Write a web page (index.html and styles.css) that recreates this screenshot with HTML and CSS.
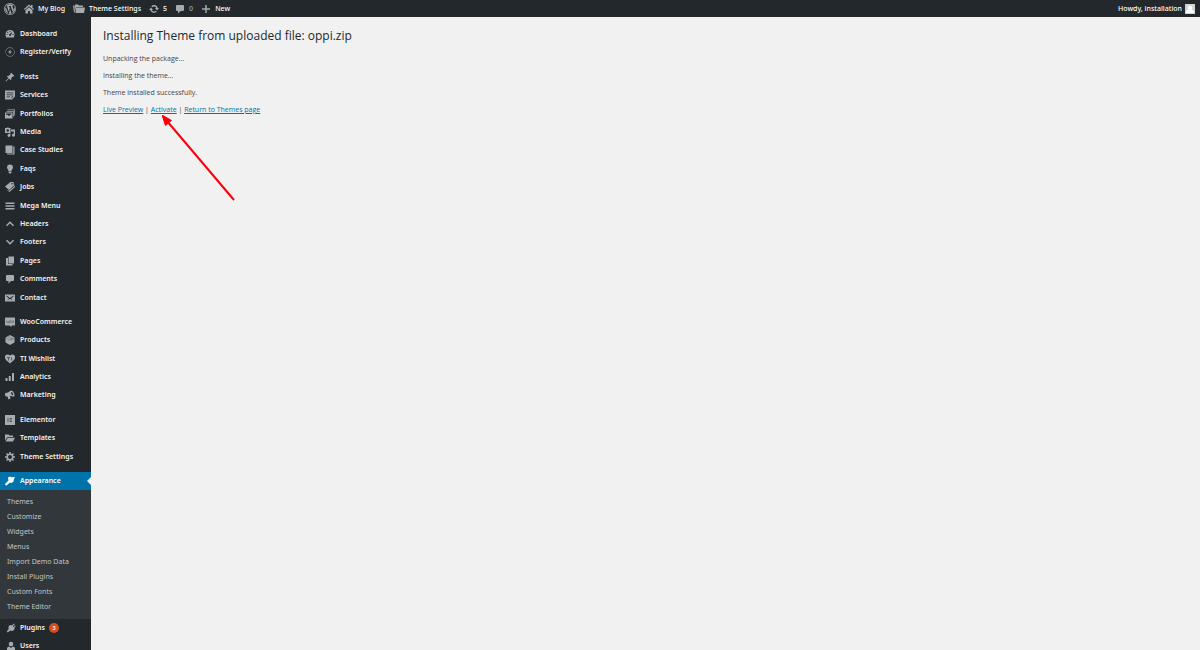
FILE: index.html
```
<!DOCTYPE html>
<html lang="en">
<head>
<meta charset="utf-8">
<title>Installing Theme</title>
<link rel="stylesheet" href="styles.css">
</head>
<body>
<header class="adminbar">
  <nav class="bar-left" aria-label="Toolbar">
    <a class="bar-item logo" href="#" aria-label="WordPress"><svg class="icon big" viewBox="0 0 20 20"><path fill-rule="evenodd" d="M10 0a10 10 0 1 0 0 20 10 10 0 0 0 0-20zm0 1.200a8.800 8.800 0 1 1 0 17.600 8.800 8.800 0 0 1 0-17.600z"/><path d="M2.800 6.800 7 17.500A8 8 0 0 1 2.800 6.800zM3.500 5.500A8 8 0 0 1 15.300 4c-1.300.2-1.600 1.500-1 2.700l1 2c.5 1.200.2 2.300-.2 3.600l-.8 2.300-3-8.800 1-.2V5H7.400v.6l1.100.2 1.200 3.300-1.700 5.200-3-8.500 1-.2V5zM10.200 10.800l2.400 6.800a8 8 0 0 1-4.600.2zM17.200 6.500A8 8 0 0 1 14 16.900l2.600-7.500c.4-1 .6-2 .6-2.900z"/></svg></a>
    <a class="bar-item site" href="#"><svg class="icon" viewBox="0 0 20 20"><path d="M10 1 0 10l1.500 1.800L10 4.500l8.500 7.300L20 10l-3-2.700V2h-3v2.500zM3 12.500l7-6 7 6V19h-5v-5H8v5H3z"/></svg>My Blog</a>
    <a class="bar-item themes" href="#"><svg class="icon wide" viewBox="0 0 24 20"><path d="M4 1h6l2 2h8v3H6L4 14z"/><path d="M0 3h3l1 14H2zM6 7h18l-2 11H5z"/></svg>Theme Settings</a>
    <a class="bar-item updates" href="#"><svg class="icon" viewBox="0 0 20 20"><path d="M10 2a8 8 0 0 1 7.500 6H20l-4 5-4-5h2.500A5 5 0 0 0 6.500 6.500L4.500 4.500A8 8 0 0 1 10 2zM4 7l4 5H5.500a5 5 0 0 0 8 1.500l2 2A8 8 0 0 1 2.500 12H0z"/></svg>5</a>
    <a class="bar-item dim" href="#"><svg class="icon" viewBox="0 0 20 20"><path d="M4 2h12q2 0 2 2v8q0 2-2 2h-5l-5 5v-5H4q-2 0-2-2V4q0-2 2-2z"/></svg>0</a>
    <a class="bar-item" href="#"><svg class="icon" viewBox="0 0 20 20"><path d="M8.500 2h3v6.500H18v3h-6.500V18h-3v-6.500H2v-3h6.500z"/></svg>New</a>
  </nav>
  <a class="account" href="#">Howdy, installation<svg class="avatar" viewBox="0 0 20 20"><path class="avatar-bg" d="M0 0h20v20H0z"/><path class="avatar-fg" d="M10 3a4.500 4.500 0 0 1 3 8c3 1 5 2.500 5 6v1H2v-1c0-3.500 2-5 5-6a4.500 4.500 0 0 1 3-8z"/></svg></a>
</header>
<div class="layout">
  <nav class="sidebar" aria-label="Main menu">
    <ul class="group">
      <li><a class="item" href="#"><svg class="icon" viewBox="0 0 20 20"><path fill-rule="evenodd" d="M10 2a9 9 0 0 0-9 9q0 3 1.500 6h15Q19 14 19 11a9 9 0 0 0-9-9zM9 4h2v2H9zM4.500 6h2v2h-2zM3 10h2v2H3zm12 0h2v2h-2zm-.5-4L12 12q0 2-2 2t-2-2q0-1 1-2z"/></svg>Dashboard</a></li>
      <li><a class="item" href="#"><svg class="icon" viewBox="0 0 20 20"><circle class="line thin" cx="10" cy="10" r="9" stroke-dasharray="24 2"/><path d="m11 5-5 6h3.500L9 15l5-6h-3.500z"/></svg>Register/Verify</a></li>
    </ul>
    <ul class="group">
      <li><a class="item" href="#"><svg class="icon" viewBox="0 0 20 20"><path d="m12 1 7 7-2 1-1-.5-3.500 3.500c.5 2 0 3.500-1 4.500L8 13l-6 6-1-1 6-6-3.500-3.500c1-1 2.500-1.500 4.500-1L11.500 4 11 3z"/></svg>Posts</a></li>
      <li><a class="item" href="#"><svg class="icon" viewBox="0 0 20 20"><path fill-rule="evenodd" d="M0 1h20v12l-6 6H0zm3 4v1.500h14V5zm0 4v1.500h14V9zm0 4v1.500h7V13zm10 0v4l4-4z"/></svg>Services</a></li>
      <li><a class="item" href="#"><svg class="icon" viewBox="0 0 20 20"><path d="M5 1h15v12h-1.500V2.500H5zM3 4h14.500v11H16V5.500H3z"/><path fill-rule="evenodd" d="M0 7h15v12H0zm2 2v3l2-1 4 3 5-4V9z"/></svg>Portfolios</a></li>
      <li><a class="item" href="#"><svg class="icon" viewBox="0 0 20 20"><path fill-rule="evenodd" d="M0 2h3l1-1h3l1 1h3v10H0zm5.500 2.500a2.500 2.500 0 1 0 0 5 2.500 2.500 0 0 0 0-5z"/><path d="M12 5h8v11.500a3 3 0 1 1-2.500-3V9H12zM8.500 13H11v4a3 3 0 1 1-2.500-3z"/></svg>Media</a></li>
      <li><a class="item" href="#"><svg class="icon" viewBox="0 0 20 20"><path d="M1 1h14v15H1zM16.500 3H19v16H4v-2h12.500z"/></svg>Case Studies</a></li>
      <li><a class="item" href="#"><svg class="icon" viewBox="0 0 20 20"><path d="M10 1a6 6 0 0 1 6 6c0 3-3 4-3 7H7c0-3-3-4-3-7a6 6 0 0 1 6-6zM7 15h6v2l-1.500 2h-3L7 17z"/></svg>Faqs</a></li>
      <li><a class="item" href="#"><svg class="icon" viewBox="0 0 20 20"><path fill-rule="evenodd" d="M11 0h6l1 7-10 9-8-7zm3 2a1.500 1.500 0 1 0 0 3 1.500 1.500 0 0 0 0-3z"/><path d="m19 3 1 7-11 10-6-4 5 1.500L19 8z"/></svg>Jobs</a></li>
      <li><a class="item" href="#"><svg class="icon" viewBox="0 0 20 20"><path d="M1 3h18v3H1zM1 8.500h18v3H1zM1 14h18v3H1z"/></svg>Mega Menu</a></li>
      <li><a class="item" href="#"><svg class="icon" viewBox="0 0 20 20"><path class="line" d="m3 13.500 7-7 7 7"/></svg>Headers</a></li>
      <li><a class="item" href="#"><svg class="icon" viewBox="0 0 20 20"><path class="line" d="m3 6.500 7 7 7-7"/></svg>Footers</a></li>
      <li><a class="item" href="#"><svg class="icon" viewBox="0 0 20 20"><path d="M7 1h11v14H7zM2 4h4v12h9v3H2z"/></svg>Pages</a></li>
      <li><a class="item" href="#"><svg class="icon" viewBox="0 0 20 20"><path d="M4 2h12q2 0 2 2v8q0 2-2 2h-4l-5 5v-5H4q-2 0-2-2V4q0-2 2-2z"/></svg>Comments</a></li>
      <li><a class="item" href="#"><svg class="icon" viewBox="0 0 20 20"><path fill-rule="evenodd" d="M0 3h20v14H0zm3 2v2l5 4-4 4 5-3h2l5 3-4-4 5-4V5l-7 5z"/></svg>Contact</a></li>
    </ul>
    <ul class="group">
      <li><a class="item" href="#"><svg class="icon" viewBox="0 0 20 20"><path d="M1 1h18q1 0 1 1v14q0 1-1 1h-6v3l-4-3H1q-1 0-1-1V2q0-1 1-1z"/><path class="mark" d="m3 7 1 5 1.500-3L7 12l1-5M9.500 7.500h2.500v4H9.500zM14.500 7.500H17v4h-2.500z"/></svg>WooCommerce</a></li>
      <li><a class="item" href="#"><svg class="icon" viewBox="0 0 20 20"><path d="m10 0 9 5v10l-9 5-9-5V5z"/><path class="mark" d="m2 6 8 4 8-4M6 3l8 4v4"/></svg>Products</a></li>
      <li><a class="item" href="#"><svg class="icon" viewBox="0 0 20 20"><path d="M10 19 2 12C-2 7 0 1 5 1q3 0 5 2 2-2 5-2c5 0 7 6 3 11z"/><path class="mark bold" d="M4 7h6M7 7v6M13 7v6"/></svg>TI Wishlist</a></li>
      <li><a class="item" href="#"><svg class="icon" viewBox="0 0 20 20"><path d="M1 12h4v6H1zM7.500 8h4v10h-4zM14 2h4v16h-4z"/></svg>Analytics</a></li>
      <li><a class="item" href="#"><svg class="icon" viewBox="0 0 20 20"><path fill-rule="evenodd" d="M13 1c4 0 8 10 5 12-2 1-5-1-8-1l1 5-4 2-2-6c-4 1-7-3-4-7 5 0 8-4 12-5zm0 3c-2 2 0 6 3 7 1-2-1-7-3-7z"/></svg>Marketing</a></li>
    </ul>
    <ul class="group">
      <li><a class="item" href="#"><svg class="icon" viewBox="0 0 20 20"><path d="M0 0h20v20H0z"/><path class="mark bold" d="M6 6v8M9 7h5M9 10h5M9 13h5"/></svg>Elementor</a></li>
      <li><a class="item" href="#"><svg class="icon" viewBox="0 0 20 20"><path d="M0 3h7l2 2h7v3H5l-5 7zM5.500 9.500H20L16 17H1z"/></svg>Templates</a></li>
      <li><a class="item" href="#"><svg class="icon" viewBox="0 0 20 20"><circle class="line gear" cx="10" cy="10" r="5.500"/><path class="line gear" d="M10 0v4M10 16v4M0 10h4M16 10h4M3 3l3 3M14 14l3 3M3 17l3-3M14 6l3-3"/></svg>Theme Settings</a></li>
    </ul>
    <div class="current">
      <a class="item active" href="#"><svg class="icon" viewBox="0 0 20 20"><path d="M6 3 10 1l3 1.500L20 2l-2 4-1 5-4 3-3-1-7 6-3-1 1-3 6-6z"/></svg>Appearance</a>
      <ul class="submenu">
        <li><a href="#">Themes</a></li>
        <li><a href="#">Customize</a></li>
        <li><a href="#">Widgets</a></li>
        <li><a href="#">Menus</a></li>
        <li><a href="#">Import Demo Data</a></li>
        <li><a href="#">Install Plugins</a></li>
        <li><a href="#">Custom Fonts</a></li>
        <li><a href="#">Theme Editor</a></li>
      </ul>
    </div>
    <ul class="group last">
      <li><a class="item" href="#"><svg class="icon" viewBox="0 0 20 20"><path d="m12 5 4-4 1.500 1.500-4 4 1.500 1.500 3-3L19.500 6l-3 3.500 1 1.500c-2 5-6 6-9 4l-5 4-2-2 4-5c-2-4 0-7 4-8z"/></svg>Plugins<span class="badge">3</span></a></li>
      <li><a class="item" href="#"><svg class="icon" viewBox="0 0 20 20"><circle cx="10" cy="6" r="4.500"/><path d="M2 19v-4q0-4 5-4l3 3 3-3q5 0 5 4v4z"/></svg>Users</a></li>
    </ul>
  </nav>
  <main class="content">
    <h1>Installing Theme from uploaded file: oppi.zip</h1>
    <p>Unpacking the package…</p>
    <p>Installing the theme…</p>
    <p>Theme installed successfully.</p>
    <p class="actions"><a href="#">Live Preview</a> | <a href="#">Activate</a> | <a href="#">Return to Themes page</a></p>
    <svg class="pointer" viewBox="0 0 74 88" aria-hidden="true"><path class="shaft" d="M5 6 72 85"/><path class="head" d="m0 0 9.500 5.500-6 5z"/></svg>
  </main>
</div>
</body>
</html>
```
FILE: styles.css
```
* { box-sizing: border-box; }

body {
  margin: 0;
  height: 100vh;
  overflow: hidden;
  display: flex;
  flex-direction: column;
  background: #f1f1f1;
  color: #444;
  font: 7px/18px "Noto Sans", "Open Sans", sans-serif;
}

a { color: inherit; text-decoration: none; }
ul { list-style: none; margin: 0; padding: 0; }

.adminbar {
  flex: none;
  display: flex;
  justify-content: space-between;
  height: 17px;
  padding: 0 5px 0 4px;
  background: #23282d;
  color: #fff;
  line-height: 17px;
  font-weight: 500;
}
.bar-left { display: flex; gap: 8px; }
.bar-item { display: flex; align-items: center; gap: 4px; }
.dim { color: #a0a5aa; }
.account { display: flex; align-items: center; gap: 3px; }

.icon { flex: none; width: 10px; height: 10px; fill: #a7abae; }
.icon.big { width: 12px; height: 12px; }
.icon.wide { width: 12px; }
.line { fill: none; stroke: #a7abae; stroke-width: 3; }
.thin { stroke-width: 1; }
.gear { stroke-width: 3; }
.mark { fill: none; stroke: #555a5e; stroke-width: 1; }
.bold { stroke-width: 2; }
.avatar { width: 10px; height: 10px; }
.avatar-bg { fill: #d2d2d2; }
.avatar-fg { fill: #fff; }

.layout { flex: 1; display: flex; min-height: 0; }

.sidebar {
  flex: none;
  width: 91px;
  padding-top: 8px;
  background: #23282d;
  color: #f4f4f4;
  font-weight: 600;
}
.group { display: grid; grid-auto-rows: 18px 19px 18px 18px 19px; }
.group + .group { margin-top: 6px; }
.item { display: flex; align-items: center; gap: 5px; height: 18px; padding-left: 5px; }

.current { margin-top: 6px; background: #32373c; }
.active { position: relative; background: #0073aa; color: #fff; }
.active .icon { fill: #fff; }
.active::after {
  content: "";
  position: absolute;
  right: 0;
  top: 5px;
  border: 4px solid transparent;
  border-left: 0;
  border-right-color: #f1f1f1;
}
.submenu { padding: 4px 0 5px 7px; line-height: 15px; font-weight: 400; color: #c0c4c7; }
.submenu a { display: block; }

.badge {
  width: 10px;
  height: 10px;
  border-radius: 5px;
  background: #d54e21;
  color: #fff;
  font-size: 6px;
  line-height: 10px;
  text-align: center;
}
.last .item { gap: 4px; padding-left: 6px; }

.content { position: relative; flex: 1; padding: 10px 12px; font-family: "Open Sans", "Noto Sans", sans-serif; }
h1 { margin: 0 0 5px; font-size: 12px; line-height: 18px; font-weight: 400; color: #23282d; }
p { margin: 0; line-height: 17px; }
.actions a { color: #0073aa; text-decoration: underline; }

.pointer { position: absolute; left: 71px; top: 98px; width: 74px; height: 88px; }
.shaft { fill: none; stroke: #fb0007; stroke-width: 2; }
.head { fill: #fb0007; stroke: #fb0007; }
```
